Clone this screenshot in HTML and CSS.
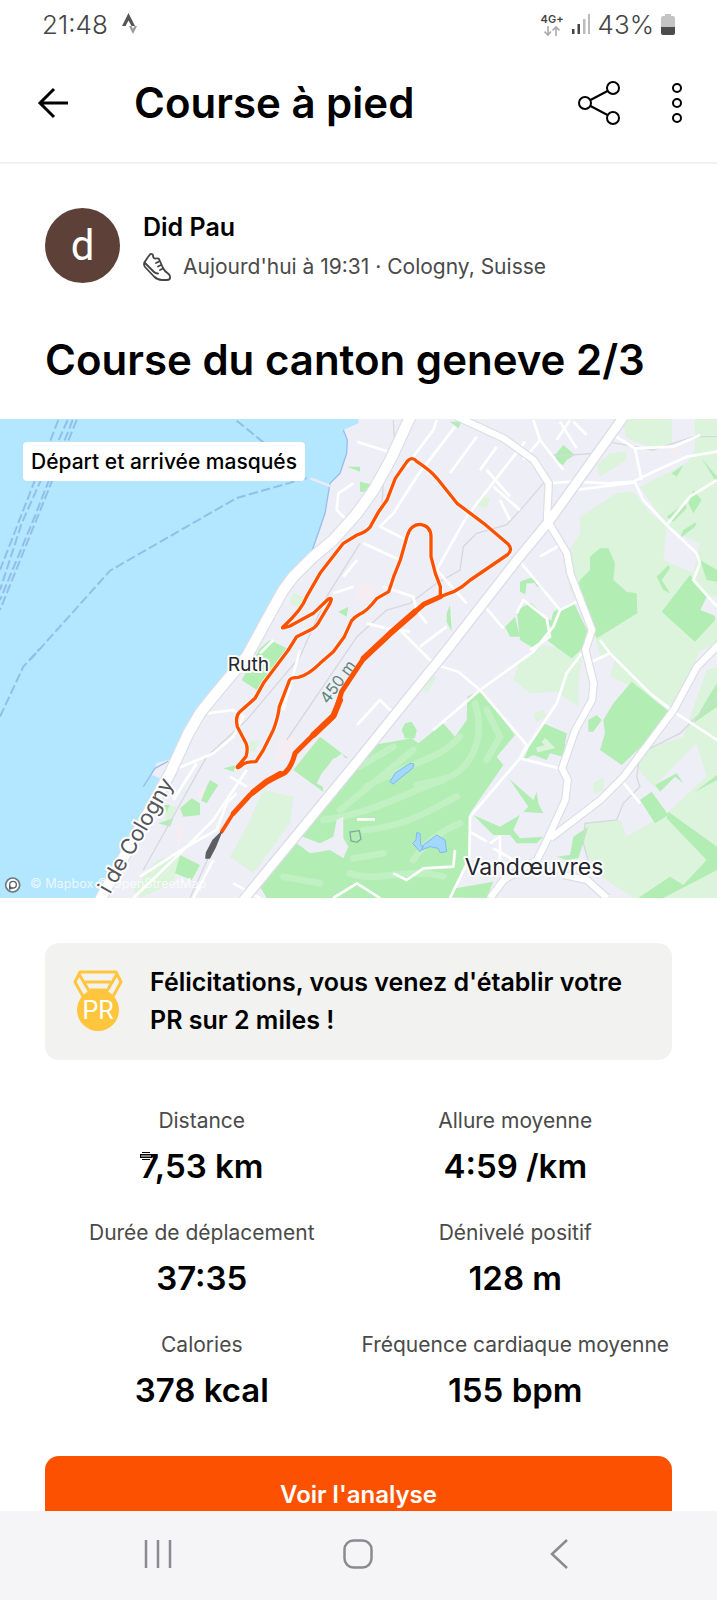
FILE: index.html
```html
<!DOCTYPE html>
<html lang="fr">
<head>
<meta charset="utf-8">
<meta name="viewport" content="width=device-width, initial-scale=1">
<title>Course à pied</title>
<link rel="stylesheet" href="styles.css">
</head>
<body>
<div class="status">
  <div class="status-group">
    <span class="status-text">21:48</span>
    <svg width="18" height="24" viewBox="0 0 18 24" aria-hidden="true">
      <path d="M7.500 1 L14 14 H10.500 L7.500 8.500 L4.500 14 H1 Z" fill="#555"/>
      <path d="M8 14 L12 22 L16 14 H13.500 L12 17 L10.500 14 Z" fill="#999"/>
    </svg>
  </div>
  <div class="status-group status-right">
    <div class="network">
      <span class="network-type">4G+</span>
      <svg width="16" height="10" viewBox="0 0 16 10" fill="none" stroke="#aaa" stroke-width="1.600" aria-hidden="true">
        <path d="M4 0 V9 M0.500 5.500 L4 9 L7 5.500 M12 10 V1 M8.500 4.500 L12 1 L15.500 4.500"/>
      </svg>
    </div>
    <svg width="20" height="20" viewBox="0 0 20 20" aria-hidden="true">
      <path d="M1 15h2.500v5H1z M6.500 10H9v10H6.500z" fill="#444"/>
      <path d="M12 5h2.500v15H12z M17 0h2v20h-2z" fill="#bbb"/>
    </svg>
    <span class="status-text">43%</span>
    <svg width="14" height="21" viewBox="0 0 14 21" aria-hidden="true">
      <path d="M4 0h6v2h2a2 2 0 0 1 2 2v9H0V4a2 2 0 0 1 2-2h2z" fill="#c4c4c4"/>
      <path d="M0 13h14v6a2 2 0 0 1-2 2H2a2 2 0 0 1-2-2z" fill="#4c4c4c"/>
    </svg>
  </div>
</div>

<header class="appbar">
  <button class="icon-button" aria-label="Retour">
    <svg width="32" height="32" viewBox="0 0 32 32" fill="none" stroke="#000" stroke-width="3" aria-hidden="true">
      <path d="M31 16 H4 M17 2 L3 16 L17 30"/>
    </svg>
  </button>
  <h1 class="appbar-title">Course à pied</h1>
  <button class="icon-button" aria-label="Partager">
    <svg width="42" height="44" viewBox="0 0 42 44" fill="none" stroke="#000" stroke-width="2" aria-hidden="true">
      <circle cx="7" cy="22" r="6"/><circle cx="35" cy="7" r="6"/><circle cx="35" cy="37" r="6"/>
      <path d="M12.500 19 L29.500 10 M12.500 25 L29.500 34"/>
    </svg>
  </button>
  <button class="icon-button icon-more" aria-label="Plus d'options">
    <svg width="10" height="42" viewBox="0 0 10 42" fill="none" stroke="#000" stroke-width="2" aria-hidden="true">
      <circle cx="5" cy="6" r="4"/><circle cx="5" cy="21" r="4"/><circle cx="5" cy="36" r="4"/>
    </svg>
  </button>
</header>

<main class="content">
  <section class="athlete">
    <div class="avatar">d</div>
    <div class="athlete-info">
      <div class="athlete-name">Did Pau</div>
      <div class="athlete-meta">
        <svg width="28" height="28" viewBox="0 0 28 28" fill="none" stroke="#444" stroke-width="1.800" stroke-linejoin="round" stroke-linecap="round" aria-hidden="true">
          <path d="M5 4 L7 1.500 C8 0.500 10 1 10 2.500 C10 4.500 11 6 13 5.500 C14 5.200 15 5 16 6 L20 15 C21 17 22 18.500 25 20.500 C28 23 28 27 24 27 H19 C15 27 13 25.500 11 23.500 L2 14 C0.500 12 1 10 2 8.500 Z"/>
          <path d="M1.500 9.500 L11 19 C12 20 13 20.500 15 20.500 M13 10 L16 8.500 M15 13.500 L18 12 M17 17 L20 15.500"/>
        </svg>
        <span>Aujourd'hui à 19:31 · Cologny, Suisse</span>
      </div>
    </div>
  </section>
  <h2 class="title">Course du canton geneve 2/3</h2>

  <section class="map">
    <svg class="map-canvas" viewBox="0 27 2151 1437" role="img" aria-label="Carte du parcours">
      <rect y="27" width="2151" height="1437" fill="#eeeef7"/>
      <path fill="#b3e6ff" d="M0 27H1075V40L1030 60L1042 90L1040 130L1020 190L990 220L975 310L960 360L930 440L870 495L820 590L720 770L640 860L580 920L520 1045L470 1060L455 1095L480 1105L400 1270L330 1390L290 1464H0Z"/>

      <g fill="#dcf3dc">
        <path d="M1865 27H2015L2016 100L1960 115L1880 85Z"/>
        <path d="M2085 27H2151V700L2060 740L2030 860L1900 750L1800 735L1790 700L1776 660L1711 540L1690 450L1740 370L1740 320L1850 250L1900 245L1950 310L2000 350L1990 450L2080 490L2100 400L2010 360L1920 230L2060 160L2085 120Z"/>
        <path d="M1790 165L1830 130L1880 125L1880 150L1800 200Z"/>
        <path d="M1560 750L1630 705L1750 725L1735 810L1735 890L1670 845L1590 850L1540 810Z"/>
        <path d="M1860 700L2110 700L2020 900L1900 830L1830 800Z"/>
        <path d="M2120 780L2151 770V1464H1900L1790 1390L1750 1310L1755 1240L1860 1230L1880 1280L2000 1210L2120 1100L2090 1000L1960 1130L1910 1070L1930 1020L2050 980Z"/>
        <path d="M790 1140L880 1160L870 1240L760 1390L690 1340L740 1250Z"/>
        <path d="M470 1350L540 1330L520 1420L420 1464L400 1440Z"/>
        <path d="M1440 255l30 10l-10 30l-30-10z M1780 1120l30-20v40l-30 10z M1600 910l30-10l10 20l-30 15z M880 550l30 10v40l-40-20z M730 1000l50-10l-20 40z M480 1180l50 10l-20 60z M1290 790l20 10l-30 50l-10-10z"/>
      </g>

      <g fill="#b2edb4">
        <path d="M1740 510L1770 480L1770 440L1800 415L1825 415L1845 460L1840 510L1880 545L1910 550L1912 610L1790 685L1730 540Z"/>
        <path d="M1660 605L1720 575L1775 690L1715 745L1640 690Z"/>
        <path d="M1550 600L1600 575L1660 640L1610 720L1560 690Z M1560 515L1600 500L1640 545L1595 520L1590 560L1560 545Z M1515 650L1545 620L1560 680L1530 680Z"/>
        <path d="M2070 495L2140 580L2145 630L2085 695L1985 605Z M2100 450L2151 480V515L2120 510Z"/>
        <path d="M1665 135L1690 105L1725 135L1700 150L1690 165L1670 155Z M1350 35h35l-10 20z M1040 170h40v15z M1080 215l40 10l-10 20h-30z"/>
        <path d="M2065 280L2080 240L2105 270L2080 310Z M2000 320L2055 280L2060 295L2020 335Z M2040 385L2085 350L2090 335L2050 360Z M1970 500L2005 465L2010 475L1985 510L2010 550L1990 540Z M2015 190L2050 165L2030 200Z M2105 145L2151 200V220Z"/>
        <path d="M1895 815L2008 905L1950 985L1865 1065L1800 1020L1815 970L1810 930L1840 880Z M1765 930L1790 915L1805 930L1780 965L1765 965Z"/>
        <path d="M1440 840L1545 975L1490 1040L1510 1065L1410 1210L1405 1340L1350 1464H800L780 1430L940 1220L1071 1050L1120 1005L1235 985L1255 1000L1330 940L1365 980L1400 930L1402 860Z M1215 940l20-5l15 25l-5 25h-30l-10-25z"/>
        <path d="M1570 1050L1600 980L1630 940L1700 970L1690 1040L1650 1030L1640 1050L1600 1035Z"/>
        <path d="M1520 1100L1600 1170L1610 1145L1615 1180L1630 1210L1570 1205L1585 1190L1530 1110Z M1420 1215L1500 1250L1560 1215L1540 1260L1560 1285L1630 1280L1610 1300L1550 1300L1530 1275L1480 1275Z"/>
        <path d="M1720 1280L1765 1250L1735 1345L1700 1350L1670 1340L1710 1335Z M1920 1170L1955 1145L2005 1215L1965 1240Z"/>
        <path d="M2005 1205L2151 1310V1380L1990 1464H1915L2010 1400L2050 1425L2120 1350L2000 1225Z M1965 1125L2030 1090L2050 1120L2025 1100L1980 1145Z M2085 1145L2151 1095V1110Z M2120 870L2151 820V890L2080 940Z"/>
        <path d="M960 980L1045 1045L1000 1045L965 1095L970 1145L880 1080Z M1071 1045L1010 1130L1000 1180L1071 1160Z"/>
        <path d="M810 690L860 715L770 840L725 810L780 715Z M1015 605L1045 590L1040 620Z M1340 610l10-25l5 80l-15-30z"/>
        <path d="M540 1335L600 1365L575 1410L525 1390Z M540 1195L575 1165L600 1180L600 1215L550 1220Z M600 1170L630 1110L655 1125L620 1180Z M475 1240L520 1225L510 1250Z M670 1075L710 1065L700 1085Z M1220 1460L1480 1415L1460 1464Z M480 1185h30l-10 20z M720 1000l15 20z"/>
      </g>

      <g fill="none" stroke="#c1f0c3" stroke-width="20" stroke-linecap="round">
        <path d="M1425 880C1450 960 1430 1020 1400 1060S1330 1110 1250 1125"/>
        <path d="M1380 980C1320 1050 1220 1060 1100 1130"/>
        <path d="M1180 1010L1080 1070M1240 1020L1020 1200M1330 1110C1210 1150 1120 1210 970 1230"/>
        <path d="M1370 1160C1290 1200 1220 1250 1090 1260M1380 1240C1330 1260 1280 1290 1240 1350"/>
        <path d="M1150 1330L1060 1345M1330 1400C1230 1370 1120 1420 1050 1390M960 1420L850 1400M1460 900L1500 980L1460 1050"/>
      </g>
      <path fill="#eeeef7" d="M1000 1050L1025 1030L1040 1050L985 1140L950 1120L965 1090Z M1010 1230L1030 1220L1030 1285L1045 1310L1030 1345L990 1320L930 1330L870 1285L880 1270L960 1300L1000 1280Z M1580 520h25l30 70l30 10l-20 30l-70-70z M2120 560l31 0v60l-50-20z"/>
      <path fill="none" stroke="#dcf3dc" stroke-width="16" d="M1630 990L1650 1010L1610 1020"/>
      <g fill="#a1d8ff" stroke="#83b8ee" stroke-width="3">
        <path d="M1170 1115L1185 1090L1230 1060L1242 1062L1238 1075L1200 1105L1180 1122Z"/>
        <path d="M1238 1300L1248 1290L1250 1268L1260 1270L1262 1305L1270 1310L1260 1325Z M1270 1305L1310 1275L1335 1290L1340 1325L1320 1328L1315 1315L1290 1310L1265 1320Z"/>
      </g>
      <path fill="#f6edf2" d="M1071 520h55v40l-55 20z M840 990l50-20l-10 70l-50 10z M590 1140l30-10l-20 50z M2000 120l30-10l15 10l-20 20z M525 1240l30 10l-20 70z"/>

      <g fill="none" stroke="#92bfe8" stroke-width="6" stroke-dasharray="28 10">
        <path d="M175 30L0 480M203 30L65 340L0 540M230 30L0 600M218 30L100 330L0 570"/>
        <path d="M710 32L800 105M0 920L70 770L120 715M90 750L330 482L710 264L925 203"/>
      </g>
      <path fill="none" stroke="#9bbdec" stroke-width="4" d="M1030 60L1042 90L1040 130L1020 190L990 220L975 310L930 440M505 1053L465 1075L430 1130"/>
      <path fill="none" stroke="#e8eaf6" stroke-width="8" d="M930 205L990 228M810 572L830 585"/>

      <g fill="none" stroke="#d6d8df" stroke-width="4">
        <path d="M1080 400L980 560L900 740L740 930L620 1040L430 1380M1630 220L1570 290L1520 345L1430 370L1390 410L1380 480L1310 520L1230 580L1160 600L1071 680L860 990M1180 30L1185 120L1150 220L1145 300M1820 95L1960 120L2080 80L2151 80M2151 860L2040 970L1920 1030L1910 1100L1920 1130L1870 1180L1850 1230L1755 1240L1750 1300L1770 1370M640 1310L570 1464M1655 135H1710L1780 130"/>
      </g>

      <g fill="none" stroke="#fff" stroke-width="8" stroke-linejoin="round">
        <path d="M1071 95L1180 130M1310 30L1300 60L1240 140L1220 170M1365 50L1250 200L1180 310M1430 80L1350 190M1490 110L1440 180M1575 95L1400 320L1310 480L1400 580M1600 30L1620 90L1570 150M1620 90L1690 180M1680 35L1730 115M1710 30L1670 90M1720 35L1760 75"/>
        <path d="M1640 220L1720 215L1830 220L1900 215L1950 190L2060 140L2151 125M1725 240L1905 217M1905 217L1930 270L2000 345L2090 430L2100 460L2080 510L2151 590M2000 345L2070 260L2151 210M1925 210L1905 115L1840 75M1905 115L2020 110L2100 75"/>
        <path d="M1560 455L1680 600L1730 575M1680 600L1660 650L1600 725L1440 840L1300 960M1550 610L1570 570L1640 625L1650 680L1590 720M1455 590L1510 655M1260 710L1340 650M1200 660L1290 750L1311 765L1375 785L1440 840L1580 1005L1560 1045L1410 1220L1408 1345L1350 1464M1560 1045L1690 1078"/>
        <path d="M1560 1045L1670 880L1700 790L1745 730M1775 755L1830 730L1800 690M1830 730L1950 850L2021 905L2151 990M1860 1105L1920 1180M1410 1265L1460 1295M1480 1315L1540 1350L1550 1400M1500 1350V1280L1470 1300"/>
        <path d="M1071 945L1140 870L1170 900L1210 900M1180 310L1140 350L1220 390M1090 400L1200 450M1150 530L1240 560L1250 600L1280 640M1100 640L1160 655L1230 665M1460 180L1530 260M1480 230L1560 300M1500 270L1530 330M1620 440L1680 405"/>
        <path d="M1060 220L1015 250L1010 300L1050 340M1071 450L1030 500M1060 530L1000 550M620 910L700 900L730 920L700 980L640 1030L570 1060L520 1080M590 1060L520 1170M820 690L780 730M900 720L850 900M740 1080L640 1230L540 1330L400 1464M640 1350L580 1464M710 1150L680 1180L650 1260L560 1310L420 1400M740 1130L690 1100M1000 1464L1071 1420L1140 1464M700 1420L780 1464M1180 1390L1220 1410L1270 1375L1360 1370L1365 1320M1071 1228H1125"/>
      </g>

      <g fill="none" stroke-linejoin="round">
        <g stroke="#dcdde7">
          <path stroke-width="38" d="M1231 20L1171 150L1121 240L1071 310L1000 390L940 440L880 500L850 540L800 630L740 740L640 860L600 910L565 970L510 1090L400 1290L300 1470"/>
          <path stroke-width="34" d="M1871 20L1646 335L1551 450L1341 720L1071 1055L730 1470"/>
          <path stroke-width="26" d="M1370 20L1511 85L1601 150L1646 220L1641 330L1701 430L1711 490L1776 660L1756 720L1781 820L1776 870L1726 960L1686 1075L1703 1110L1696 1170L1641 1290L1611 1350L1511 1410L1471 1464M2160 700L2091 770L2021 900L1871 1100L1801 1170L1651 1285M1691 1395L1761 1410L1821 1464"/>
        </g>
        <g stroke="#fff">
          <path stroke-width="31" d="M1231 20L1171 150L1121 240L1071 310L1000 390L940 440L880 500L850 540L800 630L740 740L640 860L600 910L565 970L510 1090L400 1290L300 1470"/>
          <path stroke-width="26" d="M1871 20L1646 335L1551 450L1341 720L1071 1055L730 1470"/>
          <path stroke-width="19" d="M1370 20L1511 85L1601 150L1646 220L1641 330L1701 430L1711 490L1776 660L1756 720L1781 820L1776 870L1726 960L1686 1075L1703 1110L1696 1170L1641 1290L1611 1350L1511 1410L1471 1464M2160 700L2091 770L2021 900L1871 1100L1801 1170L1651 1285M1691 1395L1761 1410L1821 1464"/>
        </g>
      </g>
      <path fill="none" stroke="#7fae98" stroke-width="4" d="M1050 1266l28-4l5 25l-12 10l-18-4z"/>

      <text class="label-credit" x="90" y="1435" font-size="38">© Mapbox © OpenStreetMap</text>
      <g class="map-labels">
        <text class="label-place" x="683" y="782" font-size="58">Ruth</text>
        <text class="label-place" x="1394" y="1395" font-size="69">Vandœuvres</text>
        <text class="label-contour" transform="translate(984 884) rotate(-54)" font-size="48">450 m</text>
        <text class="label-road" transform="translate(330 1454) rotate(-60)" font-size="65">i de Cologny</text>
      </g>

      <g fill="none" stroke-linecap="round" stroke-linejoin="round">
        <path stroke="#fff" stroke-opacity=".7" stroke-width="15" d="M1321 560L1361 545Q1390 530 1411 510L1521 435Q1540 420 1525 403L1451 340L1371 280L1311 205Q1290 180 1251 155Q1236 137 1221 155L1186 205L1161 270L1136 305L1111 350Q1100 365 1071 375L1030 400L960 490L920 560Q905 600 850 650Q840 658 870 648L940 610L985 567Q1000 560 990 580L960 630Q950 650 935 658L890 680L865 720L790 820L765 865L718 907Q705 920 712 950L738 1000Q745 1015 738 1040L712 1070Q710 1078 725 1066Q735 1055 768 1055L790 1020L820 960Q835 920 838 890L868 812Q870 802 895 802Q925 795 960 760L1000 725L1033 680L1055 632Q1065 620 1080 612Q1100 605 1131 565L1166 545L1181 500L1201 450L1221 380Q1231 343 1261 343Q1293 348 1293 380V440L1306 490L1321 530V560"/>
        <path stroke="#fc5200" stroke-width="10" d="M1321 560L1361 545Q1390 530 1411 510L1521 435Q1540 420 1525 403L1451 340L1371 280L1311 205Q1290 180 1251 155Q1236 137 1221 155L1186 205L1161 270L1136 305L1111 350Q1100 365 1071 375L1030 400L960 490L920 560Q905 600 850 650Q840 658 870 648L940 610L985 567Q1000 560 990 580L960 630Q950 650 935 658L890 680L865 720L790 820L765 865L718 907Q705 920 712 950L738 1000Q745 1015 738 1040L712 1070Q710 1078 725 1066Q735 1055 768 1055L790 1020L820 960Q835 920 838 890L868 812Q870 802 895 802Q925 795 960 760L1000 725L1033 680L1055 632Q1065 620 1080 612Q1100 605 1131 565L1166 545L1181 500L1201 450L1221 380Q1231 343 1261 343Q1293 348 1293 380V440L1306 490L1321 530V560"/>
        <path stroke="#fc5200" stroke-width="15" d="M1321 560L1271 583L1171 670L1091 745L1025 845L1003 915L940 975L885 1030Q875 1070 855 1088L800 1115L750 1155L700 1210"/>
        <path stroke="#fc5200" stroke-width="18" d="M1245 605L1171 670L1091 745M1020 870L1000 918L940 975M840 1092L800 1115L760 1146"/>
        <path stroke="#fc5200" stroke-width="11" d="M700 1210L665 1265"/>
        <path fill="#5d5d62" stroke="#5d5d62" stroke-width="5" d="M663 1268L640 1290L620 1328L618 1344L628 1344L645 1312Z"/>
      </g>

      <circle cx="38" cy="1425" r="21" fill="#fff" stroke="#6d7a82" stroke-width="5"/>
      <path fill="#565f66" fill-rule="evenodd" d="M27 1439V1424A12 12 0 1 1 39 1436ZM39 1416A8 8 0 1 0 39 1432A8 8 0 1 0 39 1416"/>
    </svg>
    <div class="map-badge">Départ et arrivée masqués</div>
  </section>

  <section class="record">
    <svg class="record-medal" width="50" height="62" viewBox="0 0 50 62" aria-hidden="true">
      <path d="M12 30L2 12L7 2H43L48 12L38 30M6 4L19 26M44 4L31 26M12 12H38M17 20H33" fill="none" stroke="#ffc63d" stroke-width="3" stroke-linejoin="round"/>
      <circle cx="25" cy="40" r="21" fill="#ffc63d"/>
      <text x="25" y="49" text-anchor="middle" class="medal-text">PR</text>
    </svg>
    <p class="record-text">Félicitations, vous venez d'établir votre PR sur 2 miles !</p>
  </section>

  <dl class="stats">
    <div class="stat"><dt>Distance</dt><dd><span class="stat-marked">7,53 km<svg class="marker" width="12" height="8" viewBox="0 0 12 8" aria-hidden="true"><path d="M2 0h8v2h2v4h-2v2H2V6H0V2h2z" fill="#000"/><path d="M2 1.500h8M1 4h10M2 6.500h8" stroke="#fff"/></svg></span></dd></div>
    <div class="stat"><dt>Allure moyenne</dt><dd>4:59 /km</dd></div>
    <div class="stat"><dt>Durée de déplacement</dt><dd>37:35</dd></div>
    <div class="stat"><dt>Dénivelé positif</dt><dd>128 m</dd></div>
    <div class="stat"><dt>Calories</dt><dd>378 kcal</dd></div>
    <div class="stat"><dt>Fréquence cardiaque moyenne</dt><dd>155 bpm</dd></div>
  </dl>

  <button class="analyse">Voir l'analyse</button>
</main>

<nav class="sysnav" aria-label="Navigation système">
  <button class="icon-button" aria-label="Applications récentes">
    <svg width="30" height="30" viewBox="0 0 30 30" fill="none" stroke="#8b8b8e" stroke-width="2.500" aria-hidden="true"><path d="M3 1V29M15 1V29M27 1V29"/></svg>
  </button>
  <button class="icon-button" aria-label="Accueil">
    <svg width="30" height="30" viewBox="0 0 30 30" fill="none" stroke="#8b8b8e" stroke-width="2.500" aria-hidden="true"><rect x="1.500" y="1.500" width="27" height="27" rx="9"/></svg>
  </button>
  <button class="icon-button" aria-label="Retour système">
    <svg width="30" height="30" viewBox="0 0 30 30" fill="none" stroke="#8b8b8e" stroke-width="2.500" aria-hidden="true"><path d="M23 1L8 15L23 29"/></svg>
  </button>
</nav>
</body>
</html>
```
FILE: styles.css
```css
* {
  box-sizing: border-box;
}

body {
  margin: 0;
  height: 100vh;
  display: flex;
  flex-direction: column;
  background: #fff;
  color: #000;
  font-family: Inter, "Liberation Sans", sans-serif;
}

h1,
h2,
p,
dl,
dd {
  margin: 0;
}

svg {
  display: block;
}

.status {
  flex: none;
  display: flex;
  justify-content: space-between;
  align-items: center;
  height: 48px;
  padding: 0 42px;
  color: #444;
}

.status-group {
  display: flex;
  align-items: center;
  gap: 13px;
}

.status-right {
  gap: 7px;
}

.status-text {
  font-size: 26px;
  font-weight: 300;
}

.network {
  display: flex;
  flex-direction: column;
  align-items: center;
}

.network-type {
  font-size: 11px;
  line-height: 14px;
  font-weight: 600;
}

.icon-button {
  padding: 0;
  border: 0;
  background: none;
}

.appbar {
  flex: none;
  display: flex;
  align-items: center;
  height: 116px;
  padding: 0 35px 4px 37px;
  border-bottom: 2px solid #f1f1f1;
}

.appbar-title {
  flex: 1;
  padding-left: 65px;
  font-size: 42px;
  line-height: 52px;
  font-weight: 600;
}

.icon-more {
  margin-left: 52px;
}

.content {
  flex: 1;
  min-height: 0;
  display: flex;
  flex-direction: column;
  overflow-y: auto;
  scrollbar-width: none;
}

.content > * {
  flex: none;
}

.athlete {
  display: flex;
  align-items: flex-start;
  gap: 23px;
  padding: 44px 45px 0;
}

.avatar {
  display: grid;
  place-items: center;
  width: 75px;
  height: 75px;
  border-radius: 50%;
  background: #5d4138;
  color: #fff;
  font-family: Roboto, sans-serif;
  font-size: 42px;
}

.athlete-name {
  font-size: 25px;
  line-height: 39px;
  font-weight: 600;
}

.athlete-meta {
  display: flex;
  align-items: center;
  gap: 12px;
  color: #4a4a4a;
  font-size: 21px;
  line-height: 40px;
}

.title {
  padding: 46px 45px 32px;
  font-size: 42px;
  line-height: 54px;
  font-weight: 600;
}

.map {
  position: relative;
}

.map-canvas {
  width: 100%;
  height: auto;
}

.map-badge {
  position: absolute;
  top: 23px;
  left: 23px;
  padding: 0 8px;
  border-radius: 4px;
  background: #fff;
  font-size: 21px;
  line-height: 39px;
  font-weight: 500;
}

.map-labels text {
  stroke: #fff;
  stroke-width: 12px;
  stroke-linejoin: round;
  paint-order: stroke;
}

.map-labels .label-place {
  fill: #26262e;
}

.map-labels .label-contour {
  fill: #5b8577;
  stroke: #eeeef7;
}

.map-labels .label-road {
  fill: #55555c;
}

.label-credit {
  fill: #fff;
  fill-opacity: 0.75;
}

.record {
  display: flex;
  align-items: center;
  gap: 27px;
  margin: 45px 45px 0;
  padding: 20px 28px 21px;
  border-radius: 14px;
  background: #f2f2f0;
}

.record-medal {
  flex: none;
}

.record-text {
  font-size: 25px;
  line-height: 38px;
  font-weight: 600;
}

.medal-text {
  fill: #fff;
  font-family: Roboto, sans-serif;
  font-size: 25px;
}

.stats {
  display: grid;
  grid-template-columns: repeat(2, minmax(0, 1fr));
  row-gap: 22px;
  padding: 41px 45px 0;
  text-align: center;
}

.stat dt {
  color: #4a4a4a;
  font-size: 21px;
  line-height: 40px;
  white-space: nowrap;
}

.stat dd {
  font-size: 33px;
  line-height: 50px;
  font-weight: 600;
}

.stat-marked {
  position: relative;
}

.marker {
  position: absolute;
  top: 6px;
  left: 0;
}

.analyse {
  height: 76px;
  margin: 41px 45px 24px;
  border: 0;
  border-radius: 14px;
  background: #fc5200;
  color: #fff;
  font-family: inherit;
  font-size: 24px;
  font-weight: 600;
}

.sysnav {
  flex: none;
  display: flex;
  justify-content: space-around;
  align-items: center;
  height: 89px;
  padding: 0 58px 3px;
  background: #f5f5f8;
}
```
